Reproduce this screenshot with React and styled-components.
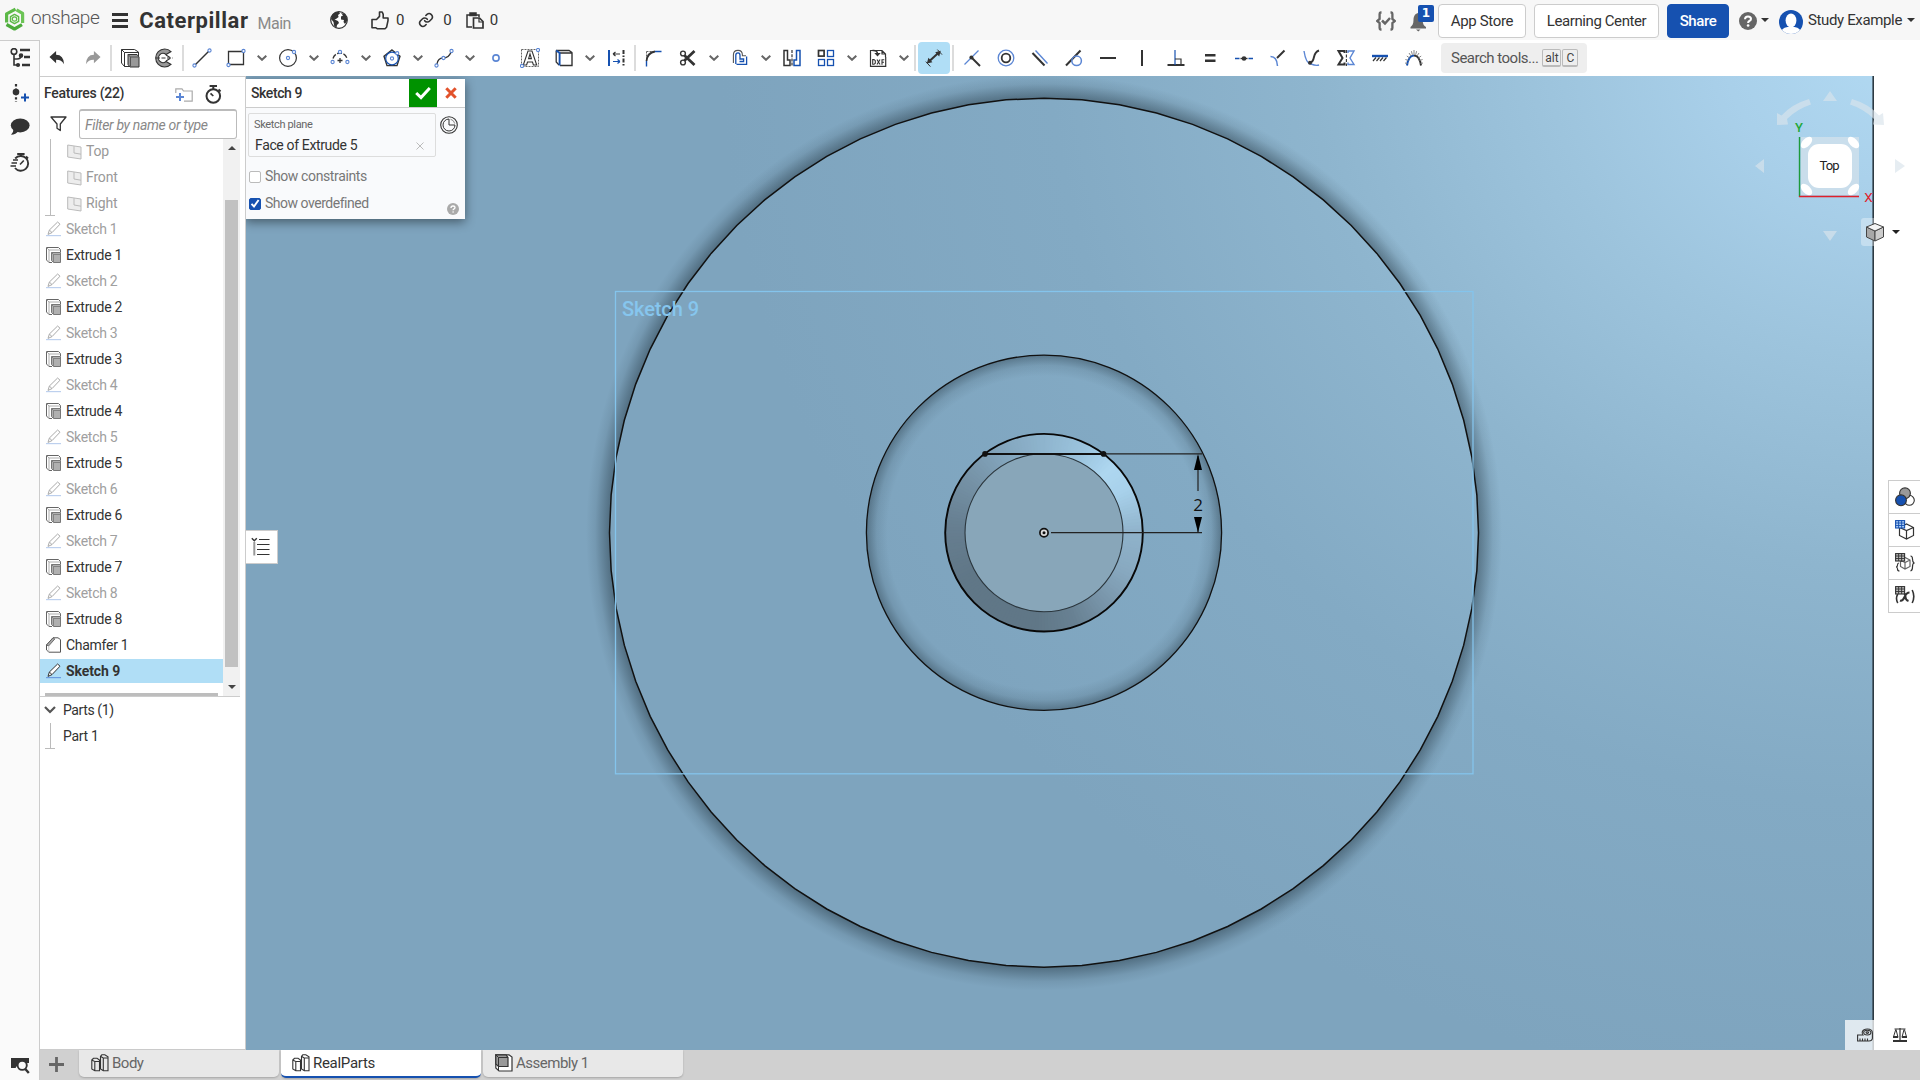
import React from 'react';
import styled, { createGlobalStyle } from 'styled-components';

const INK = '#333';
const BLUE = '#1651b0';
const SOFT = '#5b86d4';

const GlobalStyle = createGlobalStyle`
  * { box-sizing: border-box; }
  html, body { margin: 0; padding: 0; }
  body {
    font-family: Roboto, "Liberation Sans", sans-serif;
    font-size: 14px;
    color: ${INK};
    background: #fff;
    overflow: hidden;
  }
  svg { display: block; flex: none; }
`;

/* ---------- shell ---------- */

const Shell = styled.div`
  display: grid;
  grid-template-rows: 40px minmax(0, 1fr);
  width: 1920px;
  height: 1080px;
`;
const Body = styled.div`
  display: grid;
  grid-template-columns: 40px minmax(0, 1fr);
`;
const Main = styled.div`
  display: grid;
  grid-template-rows: 36px minmax(0, 1fr) 30px;
`;
const Workspace = styled.div`
  display: grid;
  grid-template-columns: 206px minmax(0, 1fr);
`;

const Label = styled.span`
  display: block;
  flex: none;
  white-space: nowrap;
  font-size: ${(p) => p.$size || 14}px;
  font-weight: ${(p) => p.$weight || 400};
  letter-spacing: ${(p) => p.$track || 0}px;
  color: ${(p) => p.$color || INK};
  margin-left: ${(p) => p.$ml || 0}px;
  margin-top: ${(p) => p.$mt || 0}px;
  line-height: 1.2;
`;

const Svg = ({ w = 20, h, ml = 0, mt = 0, children, ...rest }) => (
  <Glyph width={w} height={h || w} viewBox={`0 0 ${w} ${h || w}`} $ml={ml} $mt={mt} fill="none" stroke={INK} {...rest}>
    {children}
  </Glyph>
);
const Glyph = styled.svg`
  margin-left: ${(p) => p.$ml}px;
  margin-top: ${(p) => p.$mt}px;
`;

/* ---------- header ---------- */

const HeaderBar = styled.header`
  display: flex;
  align-items: center;
  justify-content: space-between;
  height: 40px;
  padding: 0 5px 0 4px;
  background: #f7f7f7;
`;
const HeaderGroup = styled.div`
  display: flex;
  align-items: center;
  height: 40px;
`;
const HeaderButton = styled.button`
  width: ${(p) => p.$width}px;
  height: 34px;
  margin: 1px 0 0 ${(p) => p.$ml}px;
  padding: 0;
  border: 1px solid ${(p) => (p.$primary ? BLUE : '#ccc')};
  border-radius: 4px;
  background: ${(p) => (p.$primary ? BLUE : '#fff')};
  color: ${(p) => (p.$primary ? '#fff' : INK)};
  font: ${(p) => (p.$primary ? 500 : 400)} 15px Roboto, sans-serif;
  letter-spacing: ${(p) => p.$track || 0}px;
`;
const Bell = styled.div`
  position: relative;
  width: 24px;
  height: 28px;
  margin-left: 14px;
`;
const Badge = styled.span`
  position: absolute;
  left: 8px;
  top: -1px;
  width: 16px;
  height: 17px;
  border-radius: 2px;
  background: ${BLUE};
  color: #fff;
  font: 700 12px/16px "DejaVu Sans", sans-serif;
  text-align: center;
`;
const Caret = styled.i`
  flex: none;
  width: 0;
  height: 0;
  margin-left: ${(p) => p.$ml || 0}px;
  border: 4px solid transparent;
  border-bottom: 0;
  border-top-color: #333;
`;

const Header = () => (
  <HeaderBar>
    <HeaderGroup>
      <Svg w={21} h={24} mt={-2} strokeWidth="3.2" stroke="#5cb947" strokeLinejoin="round">
        <path d="M11.5 2.2 L2.6 6.8 V15.5" />
        <path d="M12.5 2.8 L18.6 6.4 V16" stroke="#6cc456" />
        <path d="M2.5 17.5 L10.5 22 L18 17.6" stroke="#4cab3b" />
        <path d="M10.5 7.4 L14.6 9.7 V14.4 L10.5 16.7 L6.5 14.4 V9.7Z" strokeWidth="1.5" />
        <circle cx="10.5" cy="12" r="2.2" strokeWidth="1.2" />
      </Svg>
      <Label $size={19} $weight={300} $track={-0.5} $color="#555" $ml={6} $mt={-4}>onshape</Label>
      <Svg w={16} h={15} ml={13} mt={0} strokeWidth="3">
        <path d="M0 1.5H16M0 7.5H16M0 13.5H16" />
      </Svg>
      <Label $size={22} $weight={700} $track={0.55} $ml={11} $mt={2}>Caterpillar</Label>
      <Label $size={16} $color="#8a8a8a" $ml={9} $mt={7} $track={-0.5}>Main</Label>
      <Svg w={18} ml={39}>
        <circle cx="9" cy="9" r="8.3" strokeWidth="1.2" fill="#fff" />
        <path d="M2 4 L5 1.2 L9 .7 L10 2.5 L8 4 L8.6 6 L6 8 L4.5 8.4 L8 10 L9 12 L7 14 L6.5 17 L4 14.5 L3.5 11 L1 8Z M11 2 L15 3 L17 7 L17 10 L15 13 L13.5 11 L14 9 L11 8.4 L11 5.5 L13 4.5Z" fill={INK} stroke="none" />
      </Svg>
      <Svg w={18} h={19} ml={23} strokeWidth="1.6" strokeLinejoin="round">
        <path d="M1 8.5 H5.5 L8.5 5.4 V1 H11.2 L12.2 3.4 V7 H17 V9.6 L15.6 16.2 L14 17.8 H6.5 L5 16.8 H1Z" />
      </Svg>
      <Label $size={15} $ml={7}>0</Label>
      <Svg w={16} ml={14} viewBox="0 0 24 24" strokeWidth="2.4" strokeLinecap="round" strokeLinejoin="round">
        <path d="M10 13a5 5 0 0 0 7.5.5l3-3a5 5 0 0 0-7-7l-1.7 1.7" />
        <path d="M14 11a5 5 0 0 0-7.5-.5l-3 3a5 5 0 0 0 7 7l1.7-1.7" />
      </Svg>
      <Label $size={15} $ml={9}>0</Label>
      <Svg w={18} h={17} ml={14} strokeWidth="1.5">
        <path d="M6 15 H1 V3 H13 V5" />
        <path d="M4 3.6 V1 H10 V3.6Z" fill={INK} />
        <path d="M7.5 6 H13.5 L17 9.5 V16 H7.5Z" fill="#f7f7f7" strokeWidth="1.7" />
        <path d="M13 6 V10 H17" strokeWidth="1.2" />
      </Svg>
      <Label $size={15} $ml={6}>0</Label>
    </HeaderGroup>
    <HeaderGroup>
      <Svg w={20} h={20} mt={2} stroke="#666" strokeWidth="2.3">
        <path d="M5.5 1.5 H4.6 Q3.6 1.5 3.6 3 V8 L1.2 10 L3.6 12 V17 Q3.6 18.5 4.6 18.5 H5.5M14.5 1.5 H15.4 Q16.4 1.5 16.4 3 V8 L18.8 10 L16.4 12 V17 Q16.4 18.5 15.4 18.5 H14.5" />
        <path d="M6 9.5 L9 12.5 L14 7" strokeWidth="2.5" />
      </Svg>
      <Bell>
        <Svg w={17} h={19} mt={7} fill="#666" stroke="none">
          <path d="M8 0 C4.5 1 3.5 4 3.5 7 C3.5 11 2 13 .5 14 V15.5 H16 V14 C14 13 12.7 11 12.7 7 C12.7 4 11 1 8 0Z M6 16.5 H10.5 L8.3 18.5Z" />
        </Svg>
        <Badge>1</Badge>
      </Bell>
      <HeaderButton $width={88} $ml={4} $track={-0.35}>App Store</HeaderButton>
      <HeaderButton $width={125} $ml={8} $track={-0.4}>Learning Center</HeaderButton>
      <HeaderButton $width={62} $ml={8} $track={-0.4} $primary>Share</HeaderButton>
      <Svg w={18} ml={10} mt={2} stroke="none">
        <circle cx="9" cy="9" r="9" fill="#666" />
        <path d="M6 7.3 Q6 4.4 9 4.4 Q12 4.4 12 7 Q12 8.3 10.3 9 Q9.1 9.6 9.1 11" stroke="#fff" strokeWidth="2" />
        <circle cx="9.1" cy="13.5" r="1.3" fill="#fff" />
      </Svg>
      <Caret $ml={4} />
      <Svg w={24} h={24} ml={10} mt={4} stroke="none">
        <clipPath id="avatar"><circle cx="12" cy="12" r="12" /></clipPath>
        <g clipPath="url(#avatar)">
          <rect width="24" height="24" fill={BLUE} />
          <ellipse cx="12" cy="10.5" rx="5.4" ry="7" fill="#fff" />
          <path d="M1.5 24 Q2 18 8.5 17 H15.5 Q22 18 22.5 24Z" fill="#fff" />
        </g>
      </Svg>
      <Label $size={15} $ml={5} $track={-0.36}>Study Example</Label>
      <Caret $ml={5} />
    </HeaderGroup>
  </HeaderBar>
);

/* ---------- left rail ---------- */

const RailBar = styled.nav`
  display: flex;
  flex-direction: column;
  align-items: center;
  padding: 7px 0 5px;
  background: #fafafa;
  border-top: 1px solid #ccc;
  border-right: 1px solid #ccc;
`;
const RailSpacer = styled.div`
  flex: 1;
`;

const Rail = () => (
  <RailBar>
    <Svg w={20} h={20} strokeWidth="1.6">
      <circle cx="4" cy="3.4" r="2.8" />
      <path d="M4 6.2 V17 H8 M4 11 H7 Q11 11 11 7.5" />
      <circle cx="11" cy="7.6" r="1.5" fill={INK} />
      <circle cx="8" cy="17" r="1.3" fill={INK} />
      <path d="M10 2 H20 M14 9 H20 M12 17 H20" strokeWidth="2.4" />
    </Svg>
    <Svg w={20} h={20} mt={15}>
      <path d="M6 1 V19" strokeWidth="2.2" strokeDasharray="2.4 2" />
      <circle cx="6" cy="9" r="3.3" fill={INK} stroke="none" />
      <path d="M11 14.5 H19 M15 10.5 V18.5" stroke={BLUE} strokeWidth="2" />
    </Svg>
    <Svg w={20} h={18} mt={15} stroke="none" fill={INK}>
      <ellipse cx="10.2" cy="7.4" rx="9.4" ry="7" />
      <path d="M3.5 11 Q3.5 15 1 16.8 Q6 16.4 8.5 13Z" />
    </Svg>
    <Svg w={20} h={20} mt={17} strokeWidth="1.9">
      <path d="M5.2 5.5 A7.4 7.4 0 1 1 5 15" />
      <path d="M7.2 1 H14.6 M11 1 V3.5 M16 3.5 L18 5.5" />
      <path d="M10 11.5 L13.8 7.5" strokeWidth="1.6" />
      <path d="M3 7 H8 M1.5 10 H7 M.5 13 H6" strokeWidth="1.3" />
    </Svg>
    <RailSpacer />
    <Svg w={20} h={20} strokeWidth="2">
      <path d="M1 3 H19 V8 H9 L5.5 13 H1Z" fill={INK} stroke="none" />
      <circle cx="12.2" cy="10.3" r="4.6" fill="#fafafa" strokeWidth="1.9" />
      <path d="M15.3 14 L18.8 18" strokeWidth="2.4" />
    </Svg>
  </RailBar>
);

/* ---------- toolbar ---------- */

const ToolbarRow = styled.div`
  display: flex;
  align-items: center;
  padding-left: 1px;
  background: #fff;
`;
const ToolSlot = styled.div`
  display: flex;
  align-items: center;
  justify-content: center;
  flex: none;
  width: 34px;
  height: 36px;
`;
const ActiveTool = styled.div`
  display: flex;
  align-items: center;
  justify-content: center;
  width: 32px;
  height: 32px;
  border-radius: 4px;
  background: #b0def6;
`;
const DropSlot = styled.div`
  flex: none;
  display: flex;
  justify-content: center;
  width: 18px;
`;
const ToolDivider = styled.div`
  flex: none;
  width: 2px;
  height: 26px;
  margin: 0 1px;
  background: #dcdcdc;
`;
const SearchBox = styled.div`
  display: flex;
  align-items: center;
  width: 146px;
  height: 30px;
  margin-left: 10px;
  padding-left: 10px;
  border-radius: 4px;
  background: #eee;
`;
const Key = styled.kbd`
  display: flex;
  align-items: center;
  justify-content: center;
  width: ${(p) => p.$width}px;
  height: 18px;
  margin-left: ${(p) => p.$ml || 0}px;
  border: 1px solid #bbb;
  border-bottom-width: 2px;
  border-radius: 2px;
  color: #444;
  font: 12px Roboto, sans-serif;
`;

const Dot = ({ x, y, r = 1.6 }) => <circle cx={x} cy={y} r={r} fill="#fff" stroke={SOFT} strokeWidth="1.1" />;

const icons = {
  undo: <path d="M8 2.5 V6.5 Q16 6.5 16.4 16.5 Q13.5 11.5 8 11.8 V15.4 L1 9Z" fill={INK} stroke="none" transform="translate(.5 .5) scale(.95)" />,
  redo: <path d="M12 2.5 V6.5 Q4 6.5 3.6 16.5 Q6.5 11.5 12 11.8 V15.4 L19 9Z" fill="#999" stroke="none" transform="translate(.5 .5) scale(.95)" />,
  extrude: (
    <>
      <path d="M1.5 1.5 H14.5 L18.5 4 V18.5 H4.5 L1.5 15Z M1.5 1.5 L4.5 4.5 V18.5 M4.5 4.5 H18.5" />
      <path d="M8 6.5 H17 L19 9 V19 H10 L8 16.5Z" fill="#999" />
      <path d="M8 6.5 L10.5 9 V18.5 M10.5 9 H18.5" stroke="#555" />
    </>
  ),
  revolve: (
    <>
      <path d="M17 3.6 A9 9 0 1 0 17 16.4 L12 13.5 A4.6 4.6 0 1 1 12 6.5Z" fill="#999" strokeWidth="1.1" />
      <path d="M2 10 H19" strokeDasharray="4 1.5" strokeWidth="1.2" />
      <path d="M12 7 L16 9.5 M12 13 L16 10.5" strokeWidth="1.1" />
    </>
  ),
  line: (<><path d="M3 17 L17 3" strokeWidth="1.4" /><Dot x={2.5} y={17.5} /><Dot x={17.5} y={2.5} /></>),
  rect: (<><path d="M2.5 3.5 H17.5 V16.5 H2.5Z" strokeWidth="1.3" /><Dot x={2.5} y={17} /><Dot x={17.5} y={3} /></>),
  circle: (<><circle cx="10" cy="10" r="8.4" strokeWidth="1.2" /><Dot x={10} y={10} /><Dot x={16} y={4} /></>),
  arc: (
    <>
      <path d="M3 12 A7.2 7.2 0 0 1 17 12" strokeDasharray="5 1.5" strokeWidth="1.3" transform="translate(0 -1.5)" />
      <path d="M10 10 V15 M7.5 12.5 H12.5" strokeWidth="1.3" />
      <Dot x={2.6} y={14} /><Dot x={17.4} y={14} /><Dot x={10} y={4} />
    </>
  ),
  polygon: (
    <>
      <path d="M10 2 L18 8.2 L15 17.6 H5 L2 8.2Z" strokeWidth="1.4" />
      <circle cx="10" cy="10.5" r="6.3" stroke={BLUE} strokeWidth="1.2" />
      <Dot x={10} y={10.5} /><Dot x={15.2} y={5.2} />
    </>
  ),
  spline: (<><path d="M3 16 Q4 10 9 10 Q15 10 17 4" strokeWidth="1.3" /><Dot x={2.5} y={17.5} /><Dot x={9.5} y={10} /><Dot x={17.5} y={3} /></>),
  point: <circle cx="10" cy="10" r="3.1" stroke={SOFT} strokeWidth="1.6" />,
  text: (
    <>
      <rect x="1.5" y="1.5" width="17" height="17" strokeDasharray="2 1" stroke="#666" strokeWidth="1" />
      <path d="M3.3 17 L8 3 H12 L16.7 17 H13.4 L12.5 14 H7.5 L6.6 17Z M8.6 10.6 H11.4 L10 6Z" fill="#fff" strokeWidth="1.1" />
      <Dot x={2} y={18} /><Dot x={18} y={2} />
    </>
  ),
  use: (
    <>
      <path d="M2 2.5 H15 L18 4.5 M6 5 H18 V17.5 H6" strokeWidth="1.4" />
      <path d="M2.2 2.5 V14 L5 17" strokeWidth="1.3" />
      <path d="M2.2 2.5 L5.6 5 V17.5" stroke={BLUE} strokeWidth="1.9" />
    </>
  ),
  transform: (
    <>
      <path d="M3 2 V18" stroke={BLUE} strokeWidth="2" />
      <path d="M17.5 2 V18" strokeWidth="2" strokeDasharray="4 1.5 1.5 1.5" />
      <path d="M7 6 H14 M7 6 L9.5 4 M7 6 L9.5 8" strokeWidth="1.2" />
      <path d="M7 13.5 H14 M14 13.5 L11.5 11.5 M14 13.5 L11.5 15.5" stroke={BLUE} strokeWidth="1.2" />
    </>
  ),
  fillet: (
    <>
      <path d="M2.5 3.5 V12 M2.5 3.5 H10" strokeDasharray="2 1" strokeWidth="1" stroke="#666" />
      <path d="M2.5 13 Q3.5 4.5 11 3.5" strokeWidth="1.8" />
      <path d="M2.5 13 V18.5 M11 3.5 H17.5" stroke={BLUE} strokeWidth="1.4" />
    </>
  ),
  trim: (
    <>
      <path d="M16.5 3 L6.5 12.5 M16.5 17 L6.5 7.5" strokeWidth="2.8" />
      <circle cx="5" cy="5.5" r="2.4" strokeWidth="1.4" /><circle cx="5" cy="14.5" r="2.4" strokeWidth="1.4" />
    </>
  ),
  offset: (
    <>
      <path d="M3.4 15 V7 Q3.4 2.4 8 2.4 Q12.4 2.4 12.4 7 V7.8 H16" strokeWidth="1.1" stroke="#555" />
      <path d="M5.8 16 V7.2 Q5.8 4.8 8 4.8 Q10 4.8 10 7.2 V11 H13.6 V13.5 H9.5 M6.5 16.4 H16.6 V8.5" stroke={BLUE} strokeWidth="1.3" />
    </>
  ),
  mirror: (
    <>
      <path d="M2 2.5 H5.5 V12 H8 V17.5 H2Z" strokeWidth="1.5" />
      <path d="M18 2.5 H14.5 V12 H12 V17.5 H18Z" stroke={BLUE} strokeWidth="1.5" />
      <path d="M10 2 V18" strokeDasharray="3 1.2" strokeWidth="1.2" />
    </>
  ),
  pattern: (
    <>
      <rect x="2.5" y="2.5" width="5.6" height="5.6" strokeWidth="1.7" />
      <g stroke={BLUE} strokeWidth="1.3"><rect x="11.5" y="2.5" width="6" height="6" /><rect x="2.5" y="11.5" width="6" height="6" /><rect x="11.5" y="11.5" width="6" height="6" /></g>
    </>
  ),
  dxf: (
    <>
      <path d="M2.5 9 V2.5 H14 L17.5 6 V9 M14 2.5 V6 H17.5" strokeWidth="1.2" />
      <path d="M4.5 2.5 Q9.5 2 9.5 6" strokeWidth="1.5" />
      <path d="M6.3 5 H12.7 L9.5 8.6Z" fill={INK} stroke="none" />
      <path d="M2.5 9 V18.3 H17.7 V9" strokeWidth="1.2" />
      <path d="M4.7 11.6 V16.3 H6 L7.3 15.2 V12.7 L6 11.6Z M9 11.4 L12 16.6 M12 11.4 L9 16.6 M14 16.8 V11.8 H16.3 M14 14.2 H16" strokeWidth="1.1" />
    </>
  ),
  dimension: (
    <>
      <path d="M5 13.6 L14.8 4.6" strokeWidth="2" />
      <path d="M2.8 15.4 L4.4 9.8 L8.4 14.2Z M16.8 2.8 L11.2 4.2 L15.2 8.6Z" fill={INK} stroke="none" />
      <path d="M1.8 13.6 L6.4 18.6 M13.4 1.6 L18 6.6" strokeWidth="1" />
    </>
  ),
  coincident: (
    <>
      <path d="M2.5 16.5 L9 10 L16.5 2.5" stroke={SOFT} strokeWidth="1.3" />
      <path d="M9 9 L18 18" strokeWidth="2" />
      <circle cx="9.4" cy="9.4" r="2" fill={INK} stroke="none" />
    </>
  ),
  concentric: (<><circle cx="10" cy="10" r="7.8" stroke={SOFT} strokeWidth="1.3" /><circle cx="10" cy="10" r="4.3" strokeWidth="1.8" /></>),
  parallel: (<><path d="M2.5 5 L14.5 17.5" strokeWidth="2" /><path d="M5.5 2.5 L17.5 15.5" stroke={SOFT} strokeWidth="1.4" /></>),
  tangent: (<><path d="M2 17.5 L16.5 2.5" strokeWidth="2" /><circle cx="12.6" cy="12.8" r="4.8" stroke={SOFT} strokeWidth="1.5" /></>),
  horizontal: <path d="M2 10 H18" strokeWidth="2" />,
  vertical: <path d="M10 2 V18" strokeWidth="2" />,
  perpendicular: (<><path d="M1.5 17 H18.5" strokeWidth="2" /><path d="M9 2 V17" stroke={BLUE} strokeWidth="1.2" /><path d="M9 11 H15 V16" strokeWidth="1.2" /></>),
  equal: <path d="M5 7.2 H15.5 M5 12.8 H15.5" strokeWidth="2.4" />,
  midpoint: (<><path d="M1 10.5 H5.5 M14.5 10.5 H19" stroke={BLUE} strokeWidth="1.6" /><path d="M6.5 10.5 H13.5" strokeWidth="1.4" /><circle cx="10" cy="10.5" r="2.3" fill={INK} stroke="none" /></>),
  normal: (<><path d="M2.5 8.5 Q9 8.5 9.5 18" stroke={SOFT} strokeWidth="1.5" /><path d="M9 10 L16.5 2.5" strokeWidth="2" /></>),
  pierce: (<><path d="M2 3 Q4 16 9 16 Q14 18 17 17" stroke={SOFT} strokeWidth="1.4" /><path d="M17 2.5 Q13 4 12 9 Q11 14 8 15" strokeWidth="1.9" /><circle cx="8" cy="14.8" r="2" fill={INK} stroke="none" /></>),
  symmetric: (
    <>
      <path d="M8.5 5 V3 H2.5 L6.5 10 L2.5 16.5 H8.5 V14.5" strokeWidth="2" />
      <path d="M12 5 V3 H18 L14 10 L18 16.5 H12 V14.5" stroke={SOFT} strokeWidth="1.4" />
      <path d="M10.4 2 V18" strokeDasharray="3 1.5" strokeWidth="1.1" />
    </>
  ),
  fix: (<><path d="M2 8 H18" stroke={BLUE} strokeWidth="2.4" /><path d="M6 9.5 L3 13 M9.5 9.5 L6.5 13 M13 9.5 L10 13 M16.5 9.5 L13.5 13" strokeWidth="1.2" /></>),
  curvature: (
    <>
      <path d="M3 17.5 Q4.5 7.5 10 7.5" stroke={BLUE} strokeWidth="2" />
      <path d="M10 7.5 Q15.5 7.5 17 17.5" strokeWidth="2" />
      <path d="M1 15 L3.4 15.5 M1.4 11.5 L4.4 12.5 M2.8 8 L5.6 10 M5 5 L7 8 M7.4 3.2 L8.4 6.8 M10 2 V6.6 M12.6 3.2 L11.6 6.8 M15 5 L13 8 M17.2 8 L14.4 10 M18.6 11.5 L15.6 12.5 M19 15 L16.6 15.5" stroke="#888" strokeWidth="1" />
    </>
  ),
};

const tools = [
  'undo', 'redo', '|', 'extrude', 'revolve', '|', 'line', 'rect+', 'circle+', 'arc+', 'polygon+', 'spline+', 'point',
  'text', 'use+', 'transform', '|', 'fillet', 'trim+', 'offset+', 'mirror', 'pattern+', 'dxf+', '|', '*dimension', '|',
  'coincident', 'concentric', 'parallel', 'tangent', 'horizontal', 'vertical', 'perpendicular', 'equal', 'midpoint',
  'normal', 'pierce', 'symmetric', 'fix', 'curvature',
];

const Toolbar = () => (
  <ToolbarRow>
    {tools.map((t, i) => {
      if (t === '|') return <ToolDivider key={i} />;
      const name = t.replace(/[+*]/g, '');
      const icon = <Svg w={20}>{icons[name]}</Svg>;
      return (
        <React.Fragment key={i}>
          <ToolSlot>{t[0] === '*' ? <ActiveTool>{icon}</ActiveTool> : icon}</ToolSlot>
          {t.endsWith('+') && (
            <DropSlot><Svg w={10} h={6} stroke="#666" strokeWidth="2"><path d="M.7 .8 L5 4.8 L9.3 .8" /></Svg></DropSlot>
          )}
        </React.Fragment>
      );
    })}
    <SearchBox>
      <Label $size={15} $color="#555" $track={-0.5}>Search tools...</Label>
      <Key $width={19} $ml={4}>alt</Key>
      <Key $width={16} $ml={1}>C</Key>
    </SearchBox>
  </ToolbarRow>
);

/* ---------- feature panel ---------- */

const Panel = styled.aside`
  display: flex;
  flex-direction: column;
  border: 1px solid #ccc;
  border-left: 0;
  background: #fff;
`;
const PanelHeader = styled.div`
  display: flex;
  align-items: center;
  height: 32px;
  padding-left: 4px;
`;
const FilterRow = styled.div`
  display: flex;
  align-items: center;
  height: 30px;
  padding-left: 10px;
`;
const FilterInput = styled.div`
  width: 158px;
  height: 30px;
  margin-left: 12px;
  padding-left: 5px;
  border: 1px solid #bbb;
  border-top-width: 2px;
  border-radius: 3px;
  color: #888;
  font: italic 14px/28px Roboto, sans-serif;
  letter-spacing: -0.34px;
`;
const ListArea = styled.div`
  display: grid;
  grid-template-columns: 183px 17px;
  width: 200px;
  height: 558px;
  border-bottom: 1px solid #ccc;
`;
const Rows = styled.div`
  display: flex;
  flex-direction: column;
  overflow: hidden;
`;
const PlaneGroup = styled.div`
  display: grid;
  grid-template-columns: 16px 1fr;
  flex: none;
  padding-left: 5px;
  height: 77px;
`;
const PlaneRow = styled.div`
  display: flex;
  align-items: center;
  gap: 4px;
  height: 26px;
  padding-left: 6px;
  padding-bottom: 1px;
`;
const Row = styled.div`
  display: flex;
  align-items: center;
  gap: 5px;
  flex: none;
  height: ${(p) => (p.$active ? 24 : 26)}px;
  margin-top: ${(p) => (p.$active ? 1 : 0)}px;
  padding-left: 6px;
  background: ${(p) => (p.$active ? '#b0def6' : 'transparent')};
`;
const RollbackBar = styled.div`
  flex: none;
  width: 173px;
  height: 3px;
  margin: 10px 0 0 5px;
  background: #bdbdbd;
`;
const ScrollTrack = styled.div`
  display: flex;
  flex-direction: column;
  align-items: center;
  background: #f1f1f1;
`;
const ScrollThumb = styled.div`
  width: 13px;
  height: 467px;
  margin-top: 50px;
  background: #c1c1c1;
`;
const PartsHeader = styled.div`
  display: flex;
  align-items: center;
  height: 26px;
  padding-left: 4px;
`;
const PartsBody = styled.div`
  display: flex;
  align-items: center;
  height: 26px;
  padding-left: 5px;
`;

const PlaneIcon = () => (
  <Svg w={15} h={16} stroke="#bbb" fill="#ededed">
    <path d="M.7 1 L14 3 V15 L.7 13Z" />
    <path d="M7 2.2 V9 L14 10.2" fill="none" />
  </Svg>
);
const PencilIcon = ({ on }) => (
  <Svg w={15} h={16} stroke={on ? '#333' : '#aaa'} strokeWidth="1">
    <path d="M0 14.6 H15" stroke={on ? '#6b9be0' : '#bdd0ee'} strokeWidth="1.2" />
    <path d="M2 13.4 L3.4 9 L11.6 1 L14 3.2 L6 11.6Z M3.4 9 L6 11.6" fill="#fff" />
  </Svg>
);
const ExtrudeIcon = () => (
  <Svg w={15} h={16} stroke="#666">
    <path d="M.5 .5 H12.5 L14.5 2.5 V5 M.5 .5 V13 L3 15.5 H6" />
    <path d="M.5 .5 L3 3 V15.5 M3 3 H14.5" stroke="#999" strokeWidth=".8" />
    <path d="M5.5 5.5 H14.5 V15.5 H7.5 L5.5 13.5Z" fill="#b0b0b0" stroke="#777" />
    <path d="M5.5 5.5 L7.5 7.5 V15 M7.5 7.5 H14.5" stroke="#777" strokeWidth=".8" />
  </Svg>
);
const ChamferIcon = () => (
  <Svg w={15} h={16} stroke="#555">
    <path d="M.5 8 L7 .8 H12 L14.5 2.6 V15.2 H3 L.5 13Z" />
    <path d="M.5 8 L7 .8 L8.8 2 L2.6 9Z" fill="#aaa" strokeWidth=".8" />
    <path d="M2.8 9 V15" stroke="#bbb" strokeWidth=".8" />
  </Svg>
);

const features = [];
for (let n = 1; n <= 8; n += 1) features.push(['sketch', `Sketch ${n}`], ['extrude', `Extrude ${n}`]);
features.push(['chamfer', 'Chamfer 1'], ['active', 'Sketch 9']);

const FeatureIcon = ({ kind }) => {
  if (kind === 'extrude') return <ExtrudeIcon />;
  if (kind === 'chamfer') return <ChamferIcon />;
  return <PencilIcon on={kind === 'active'} />;
};

const FeaturePanel = () => (
  <Panel>
    <PanelHeader>
      <Label $weight={500} $track={-0.27}>Features (22)</Label>
      <Svg w={18} h={14} ml={51} mt={4} stroke="#aaa" strokeWidth="1.2">
        <path d="M.8 4 V.8 H7 L8.5 3 H17.2 V13.2 H9 M.8 4 V5" />
        <path d="M1 9 H9 M5 5 V13" stroke={SOFT} strokeWidth="2" />
      </Svg>
      <Svg w={17} h={19} ml={12} mt={3} strokeWidth="2">
        <circle cx="8.3" cy="11" r="6.8" />
        <path d="M4.6 1 H12 M8.3 1 V4 M13.5 4.5 L15.5 6.5" />
        <path d="M8.3 11 L5.5 8.3" strokeWidth="1.7" />
      </Svg>
    </PanelHeader>
    <FilterRow>
      <Svg w={17} h={16} strokeWidth="1.3" strokeLinejoin="round"><path d="M1 1 H16 L10.3 8 V14.5 L7 12.2 V8Z" /></Svg>
      <FilterInput>Filter by name or type</FilterInput>
    </FilterRow>
    <ListArea>
      <Rows>
        <PlaneGroup>
          <Svg w={10} h={77} stroke="#bbb"><path d="M5.5 0 V76.5 M0 76.5 H10" /></Svg>
          <div>
            {['Top', 'Front', 'Right'].map((n) => (
              <PlaneRow key={n}><PlaneIcon /><Label $color="#999" $track={-0.15}>{n}</Label></PlaneRow>
            ))}
          </div>
        </PlaneGroup>
        {features.map(([kind, name]) => (
          <Row key={name} $active={kind === 'active'}>
            <FeatureIcon kind={kind} />
            <Label
              $mt={1}
              $track={kind === 'active' ? -0.1 : -0.28}
              $color={kind === 'sketch' ? '#a0a0a0' : INK}
              $weight={kind === 'active' ? 700 : 400}
            >
              {name}
            </Label>
          </Row>
        ))}
        <RollbackBar />
      </Rows>
      <ScrollTrack>
        <Svg w={8} h={4} mt={7} fill="#444" stroke="none"><path d="M0 4 L4 0 L8 4Z" /></Svg>
        <ScrollThumb />
        <Svg w={8} h={4} mt={18} fill="#444" stroke="none"><path d="M0 0 L4 4 L8 0Z" /></Svg>
      </ScrollTrack>
    </ListArea>
    <PartsHeader>
      <Svg w={12} h={8} stroke="#555" strokeWidth="2.2"><path d="M1 1 L6 6 L11 1" /></Svg>
      <Label $ml={7} $mt={1} $track={-0.4}>Parts (1)</Label>
    </PartsHeader>
    <PartsBody>
      <Svg w={10} h={26} stroke="#bbb"><path d="M5.5 0 V25.5 M0 25.5 H10" /></Svg>
      <Label $ml={8} $mt={1} $track={-0.3}>Part 1</Label>
    </PartsBody>
  </Panel>
);

/* ---------- model canvas ---------- */

const CanvasArea = styled.section`
  position: relative;
  overflow: hidden;
  background: #fff;
`;
const Scene = styled.svg`
  width: 1674px;
  height: 974px;
  font-family: Roboto, sans-serif;
`;

const CX = 1044;
const CY = 532.7;
const ngon = (r, n) =>
  `M${Array.from({ length: n }, (_, i) => {
    const a = (i / n) * Math.PI * 2;
    return `${(CX + r * Math.sin(a)).toFixed(2)} ${(CY - r * Math.cos(a)).toFixed(2)}`;
  }).join('L')}Z`;

/* chamfer shading by compass bearing, clockwise from north */
const shade = [
  [0, 143, 181, 206], [25, 155, 196, 222], [45, 174, 215, 240], [62, 168, 209, 235], [90, 143, 178, 202],
  [115, 136, 169, 192], [135, 123, 152, 173], [160, 104, 129, 147], [185, 96, 119, 135], [240, 96, 119, 135],
  [275, 103, 127, 145], [305, 117, 146, 166], [335, 132, 167, 191], [360, 143, 181, 206],
];
const shadeAt = (deg) => {
  const i = shade.findIndex((s, k) => deg >= s[0] && deg <= shade[k + 1][0]);
  const a = shade[i];
  const b = shade[i + 1];
  const t = (deg - a[0]) / (b[0] - a[0]);
  return `rgb(${[1, 2, 3].map((c) => Math.round(a[c] + (b[c] - a[c]) * t)).join(',')})`;
};
const wedge = (deg) => {
  const p = (d) => `${CX + 99 * Math.sin((d * Math.PI) / 180)} ${CY - 99 * Math.cos((d * Math.PI) / 180)}`;
  return `M${CX} ${CY}L${p(deg - 0.5)}L${p(deg + 2.5)}Z`;
};

const Model = () => (
  <Scene viewBox="246 76 1674 974" fill="none" stroke="#111">
    <defs>
      <radialGradient id="plane" gradientUnits="userSpaceOnUse" cx="0" cy="0" r="1" gradientTransform="translate(1900 40) scale(1180 1060)">
        <stop offset="0" stopColor="#b2daf3" />
        <stop offset=".15" stopColor="#a9d0ea" />
        <stop offset=".3" stopColor="#9dc4dd" />
        <stop offset=".5" stopColor="#8eb5ce" />
        <stop offset=".72" stopColor="#83aac4" />
        <stop offset="1" stopColor="#7ea4be" />
      </radialGradient>
      <radialGradient id="outerShade" gradientUnits="userSpaceOnUse" cx={CX} cy={CY} r="458">
        <stop offset=".944" stopColor="#14242e" stopOpacity=".46" />
        <stop offset=".96" stopColor="#14242e" stopOpacity=".3" />
        <stop offset=".98" stopColor="#14242e" stopOpacity=".09" />
        <stop offset="1" stopColor="#14242e" stopOpacity="0" />
      </radialGradient>
      <radialGradient id="innerShade" gradientUnits="userSpaceOnUse" cx={CX} cy={CY} r="178">
        <stop offset=".88" stopColor="#14242e" stopOpacity="0" />
        <stop offset=".94" stopColor="#14242e" stopOpacity=".1" />
        <stop offset="1" stopColor="#14242e" stopOpacity=".38" />
      </radialGradient>
    </defs>
    <rect x="246" y="76" width="1627" height="974" fill="url(#plane)" stroke="none" />
    <path d={`M560 50H1530V1020H560Z${ngon(434.5, 72)}`} fillRule="evenodd" fill="url(#outerShade)" stroke="none" />
    <path d={ngon(434.5, 72)} strokeWidth="1.5" />
    <circle cx={CX} cy={CY} r="177.6" fill="url(#innerShade)" strokeWidth="1.3" />
    <g stroke="none">
      {Array.from({ length: 180 }, (_, i) => <path key={i} d={wedge(i * 2)} fill={shadeAt(i * 2)} />)}
    </g>
    <circle cx={CX} cy={CY} r="79" fill="#88a6b9" stroke="#2b363d" strokeWidth="1.1" />
    <circle cx={CX} cy={CY} r="98.8" strokeWidth="1.9" stroke="#080808" />
    <path d="M985 453.9 H1103" strokeWidth="2" />
    <path d="M1103 453.9 H1202 M1051 532.7 H1202 M1198 456 V491 M1198 520 V532" stroke="#222" strokeWidth="1.2" />
    <circle cx="985" cy="453.9" r="2.8" fill="#111" stroke="none" />
    <circle cx="1103.5" cy="453.9" r="2.8" fill="#111" stroke="none" />
    <path d="M1198 454 L1202 470 H1194Z M1198 532.6 L1202 517 H1194Z" fill="#000" stroke="none" />
    <text x="1198" y="511" textAnchor="middle" fontSize="17" fontFamily="Open Sans, sans-serif" fill="#111" stroke="none">2</text>
    <circle cx={CX} cy={CY} r="4.1" fill="#ddd" strokeWidth="1.7" />
    <circle cx={CX} cy={CY} r="1.5" fill="#111" stroke="none" />
    <rect x="615.5" y="291.5" width="857.5" height="482.3" stroke="#84c4ec" strokeWidth="1.3" />
    <text x="622" y="316" fontSize="20" fontWeight="500" fill="#86c6ee" stroke="none" textLength="77">Sketch 9</text>
    <path d="M1873.2 76 V1050" stroke="#2d3a42" strokeWidth="1.6" />

    <g fill="#d9e4ec" fillOpacity=".66" stroke="none">
      <path d="M1823 101 L1830 91 L1837 101Z M1823 231 L1830 241 L1837 231Z M1764 159 L1755 166 L1764 173Z M1895 159 L1905 166 L1895 173Z" />
      <path d="M1809 99 L1811 104.5 Q1797 109 1787 119 L1788 124.5 L1777 125 L1777 113 L1781.5 115.5 Q1792 104 1809 99Z" />
      <path d="M1852 99 L1850 104.5 Q1864 109 1874 119 L1873 124.5 L1884 125 L1883 113 L1879 115.5 Q1869 104 1852 99Z" />
      <rect x="1801" y="137" width="58" height="58" />
    </g>
    <rect x="1808" y="144" width="44" height="44" rx="11" fill="#fff" stroke="none" />
    <g fill="#fff" stroke="none">
      <ellipse cx="1806.5" cy="142.5" rx="7" ry="4" transform="rotate(-45 1806.5 142.5)" />
      <ellipse cx="1853.5" cy="142.5" rx="7" ry="4" transform="rotate(45 1853.5 142.5)" />
      <ellipse cx="1806.5" cy="189.5" rx="7" ry="4" transform="rotate(45 1806.5 189.5)" />
      <ellipse cx="1853.5" cy="189.5" rx="7" ry="4" transform="rotate(-45 1853.5 189.5)" />
    </g>
    <path d="M1799.5 137 V197" stroke="#1d9a3a" strokeWidth="1.4" />
    <path d="M1799 196.5 H1859" stroke="#e0202a" strokeWidth="1.4" />
    <g stroke="none" textAnchor="middle">
      <text x="1799" y="132" fontSize="13" fontWeight="500" fill="#1fa838">Y</text>
      <text x="1868.5" y="202" fontSize="13.5" fill="#e0202a">X</text>
      <text x="1829.5" y="170" fontSize="13" fill="#222" textLength="20">Top</text>
    </g>
    <rect x="1861" y="218" width="58" height="28" rx="3" fill="#fff" fillOpacity=".35" stroke="none" />
    <g strokeWidth="1" stroke="#444">
      <path d="M1866.5 227 L1875 231 V241 L1866.5 237Z" fill="#a8a8a8" />
      <path d="M1883.5 227 L1875 231 V241 L1883.5 237Z" fill="#ccc" />
      <path d="M1866.5 227 L1875 223.5 L1883.5 227 L1875 231Z" fill="#f4f4f4" />
    </g>
    <path d="M1892 230 H1900 L1896 234Z" fill="#222" stroke="none" />
  </Scene>
);

/* ---------- canvas overlays ---------- */

const Dialog = styled.div`
  position: absolute;
  left: -1px;
  top: 3px;
  width: 220px;
  height: 140px;
  background: #f9fafc;
  box-shadow: 0 3px 10px rgba(0, 0, 0, 0.45);
`;
const DialogHeader = styled.div`
  display: flex;
  align-items: center;
  height: 29px;
  background: #fff;
  border-bottom: 1px solid #ccc;
`;
const DialogTitle = styled.div`
  flex: 1;
  padding-left: 6px;
  font-weight: 500;
  letter-spacing: -0.4px;
`;
const Confirm = styled.div`
  display: flex;
  align-items: center;
  justify-content: center;
  width: 28px;
  height: 28px;
  background: #009200;
`;
const Cancel = styled(Confirm)`
  background: transparent;
`;
const DialogRow = styled.div`
  display: flex;
  gap: 4px;
  padding: 5px 6px 6px 3px;
`;
const PlaneField = styled.div`
  width: 188px;
  height: 44px;
  padding: 4px 11px 0 5px;
  border: 1px solid #ddd;
  border-radius: 2px;
`;
const FieldValue = styled.div`
  display: flex;
  align-items: center;
  justify-content: space-between;
  padding-left: 1px;
`;
const CheckRow = styled.div`
  display: flex;
  align-items: center;
  height: 27px;
  padding-left: 4px;
`;
const CheckBox = styled.span`
  display: flex;
  align-items: center;
  justify-content: center;
  width: 12px;
  height: 12px;
  border: 1px solid ${(p) => (p.$on ? BLUE : '#bbb')};
  border-radius: 2px;
  background: ${(p) => (p.$on ? BLUE : '#fff')};
`;

const SketchDialog = () => (
  <Dialog>
    <DialogHeader>
      <DialogTitle>Sketch 9</DialogTitle>
      <Confirm><Svg w={16} h={14} stroke="#fff" strokeWidth="3"><path d="M1.2 7 L6 11.5 L14.8 2" /></Svg></Confirm>
      <Cancel><Svg w={12} h={12} stroke="#e2522b" strokeWidth="3"><path d="M1.3 1.3 L10.7 10.7 M10.7 1.3 L1.3 10.7" /></Svg></Cancel>
    </DialogHeader>
    <DialogRow>
      <PlaneField>
        <Label $size={11} $color="#666" $track={-0.35}>Sketch plane</Label>
        <FieldValue>
          <Label $mt={6} $track={-0.36}>Face of Extrude 5</Label>
          <Svg w={8} mt={6} stroke="#bbb"><path d="M.5 .5 L7.5 7.5 M7.5 .5 L.5 7.5" /></Svg>
        </FieldValue>
      </PlaneField>
      <Svg w={18} mt={3}>
        <circle cx="9" cy="9" r="8.3" strokeWidth="1.1" />
        <path d="M9 3 V9 H15 A6 6 0 1 1 9 3Z" strokeWidth="1" />
        <path d="M10.5 3.2 A6 6 0 0 1 14.8 7.6" strokeWidth="1" stroke="#888" />
      </Svg>
    </DialogRow>
    <CheckRow>
      <CheckBox />
      <Label $color="#777" $ml={4} $track={-0.38}>Show constraints</Label>
    </CheckRow>
    <CheckRow>
      <CheckBox $on><Svg w={10} h={9} stroke="#fff" strokeWidth="1.9"><path d="M1.5 4.8 L4 7.5 L8.6 1" /></Svg></CheckBox>
      <Label $color="#777" $ml={4} $track={-0.48}>Show overdefined</Label>
      <Svg w={12} ml={78} mt={10} stroke="none">
        <circle cx="6" cy="6" r="6" fill="#aaa" />
        <path d="M4 4.9 Q4 3 6 3 Q8 3 8 4.8 Q8 5.6 6.8 6.1 Q6.1 6.5 6.1 7.3" stroke="#fff" strokeWidth="1.3" />
        <circle cx="6.1" cy="9" r=".8" fill="#fff" />
      </Svg>
    </CheckRow>
  </Dialog>
);

const TreeToggle = styled.div`
  position: absolute;
  left: -1px;
  top: 454px;
  width: 33px;
  height: 34px;
  padding: 6px 0 0 6px;
  background: #fff;
  border: 1px solid #ccc;
  border-left: 0;
`;
const SideTools = styled.div`
  position: absolute;
  right: 0;
  top: 404px;
  width: 32px;
  border: 1px solid #ccc;
  border-right: 0;
  background: #fff;
`;
const SideCell = styled.div`
  display: flex;
  align-items: center;
  height: 33px;
  padding-left: 6px;
  border-bottom: 1px solid #ccc;
  &:last-child { border-bottom: 0; height: 32px; }
`;
const MeasureTools = styled.div`
  position: absolute;
  right: 0;
  bottom: 0;
  display: flex;
  align-items: center;
  width: 75px;
  height: 30px;
  padding-left: 12px;
  background: rgba(255, 255, 255, 0.75);
`;

const TableMark = ({ color, fill }) => (
  <g>
    <rect x=".6" y=".6" width="9" height="7.4" fill={fill} stroke={color} strokeWidth="1.1" />
    <path d="M.6 3 H9.6 M.6 5.5 H9.6 M3.6 .6 V8 M6.6 .6 V8" stroke={color} strokeWidth=".9" />
  </g>
);

const Overlays = () => (
  <>
    <SketchDialog />
    <TreeToggle>
      <Svg w={19} h={19}>
        <path d="M8 2.5 H18.5 M6 7.5 H18.5 M6 12.5 H18.5 M6 17.5 H18.5" strokeWidth="1.1" />
        <path d="M3.3 5 V18.5" stroke="#999" strokeWidth="2" />
        <path d="M.8 1.2 L3.3 3.8 L5.8 1.2" strokeWidth="1.4" />
      </Svg>
    </TreeToggle>
    <SideTools>
      <SideCell>
        <Svg w={20} strokeWidth="1.1">
          <circle cx="14.3" cy="13.3" r="5" fill="#fff" /><circle cx="10" cy="6.3" r="5.4" fill="#999" /><circle cx="6" cy="13.3" r="5.4" fill={BLUE} />
        </Svg>
      </SideCell>
      <SideCell>
        <Svg w={20} strokeWidth="1.2">
          <path d="M4.5 7.5 L11.5 4 L18.5 7.5 V15.5 L11.5 19 L4.5 15.5Z M4.5 7.5 L11.5 10.5 L18.5 7.5 M11.5 10.5 V19" />
          <TableMark color={BLUE} fill="#a9cbf5" />
        </Svg>
      </SideCell>
      <SideCell>
        <Svg w={20} strokeWidth="1.2">
          <path d="M5.5 7 L10 4.5 L15 7 V13.5 L10 16 L5.5 13.5Z M5.5 7 L10 9.5 L15 7 M10 9.5 V16" stroke="#666" />
          <path d="M4 10 Q2.5 10 2.5 12 T1 14 Q2.5 14 2.5 16 T4.5 18 M15.5 3 Q17.5 3 17.5 6 T19 10 Q17.5 10.5 17.5 14 T15.5 18" />
          <TableMark color="#333" fill="#bbb" />
        </Svg>
      </SideCell>
      <SideCell>
        <Svg w={20} strokeWidth="1.6">
          <path d="M2.8 8 Q.2 12.5 2.8 17 M17.2 4 Q20.4 10.5 17.2 17" />
          <path d="M5 14.5 Q7.5 15.5 9.5 11 T14.5 6.5 M9 7.5 Q10.5 8 10.5 11 T13.5 15" strokeWidth="2" />
          <TableMark color="#333" fill="#bbb" />
        </Svg>
      </SideCell>
    </SideTools>
    <MeasureTools>
      <Svg w={16} h={14} strokeWidth="1.1">
        <path d="M.6 7 H6 Q4.6 5.4 5.4 3.5 Q6.5 1 10.3 1 Q15.4 1 15.4 5 V10.5 Q15 13 12 13 H.6Z" />
        <ellipse cx="10.3" cy="4.6" rx="3.6" ry="2.4" /><ellipse cx="10.3" cy="4.6" rx="1.3" ry=".8" />
        <path d="M3 13 V10.5 M5.5 13 V10.5 M8 13 V10.5 M10.5 13 V10.5" />
      </Svg>
      <Svg w={14} h={14} ml={20} strokeWidth="1.2">
        <path d="M1.5 1 H12.5 M7 0 V12" /><path d="M0 13 H14" strokeWidth="2" />
        <path d="M2.8 1.5 L.6 8.5 M3 1.5 L4.8 8.5 M11 1.5 L9.2 8.5 M11.4 1.5 L13.4 8.5" strokeWidth="1" />
        <path d="M0 9 H5.2 M8.8 9 H14" strokeWidth="1.8" />
      </Svg>
    </MeasureTools>
  </>
);

/* ---------- document tabs ---------- */

const TabBar = styled.footer`
  display: flex;
  align-items: flex-start;
  padding-left: 9px;
  background: #d0d0d0;
`;
const Tab = styled.div`
  display: flex;
  align-items: center;
  gap: 3px;
  width: 200px;
  height: ${(p) => (p.$active ? 28 : 27)}px;
  margin-left: ${(p) => p.$ml}px;
  padding-left: ${(p) => (p.$active ? 11 : 12)}px;
  padding-bottom: ${(p) => (p.$active ? 0 : 1)}px;
  border-radius: 0 0 5px 5px;
  border-bottom: ${(p) => (p.$active ? `2px solid ${BLUE}` : '0')};
  background: ${(p) => (p.$active ? '#fff' : '#e8e8e8')};
  box-shadow: 0 1px 2px rgba(0, 0, 0, 0.2);
`;
const StudioIcon = () => (
  <Svg w={18} h={18} strokeWidth="1.1">
    <path d="M.8 6 L2.5 4.3 H6 L8.5 6 V16.8 H3.8 L.8 15Z M.8 6 L3.8 7.5 V16.8 M3.8 7.5 H8.5" />
    <path d="M9.5 2.3 L10.8 .8 H13.8 L17 2.8 V16.8 H12.3 L9.5 15Z M9.5 2.3 L12.3 4 V16.8 M12.3 4 H17" />
  </Svg>
);

const Tabs = () => (
  <TabBar>
    <Svg w={15} mt={7} stroke="#666" strokeWidth="2.8"><path d="M7.5 0 V15 M0 7.5 H15" /></Svg>
    <Tab $ml={15}><StudioIcon /><Label $size={15} $color="#666" $track={-0.5}>Body</Label></Tab>
    <Tab $ml={2} $active><StudioIcon /><Label $size={15} $track={-0.3}>RealParts</Label></Tab>
    <Tab $ml={2}>
      <Svg w={18} h={18} strokeWidth="1.2">
        <path d="M.8 .8 H14 L17 3 V17 H4 L.8 14Z" fill="#fff" />
        <path d="M.8 .8 H11 L13 3.5 V12.5 H3.5 L.8 10Z" fill="#999" />
        <path d="M.8 .8 L3.5 3.5 V16.5 M3.5 3.5 H13" strokeWidth="1" />
      </Svg>
      <Label $size={15} $color="#666" $track={-0.5}>Assembly 1</Label>
    </Tab>
  </TabBar>
);

export default function App() {
  return (
    <>
      <GlobalStyle />
      <Shell>
        <Header />
        <Body>
          <Rail />
          <Main>
            <Toolbar />
            <Workspace>
              <FeaturePanel />
              <CanvasArea>
                <Model />
                <Overlays />
              </CanvasArea>
            </Workspace>
            <Tabs />
          </Main>
        </Body>
      </Shell>
    </>
  );
}
